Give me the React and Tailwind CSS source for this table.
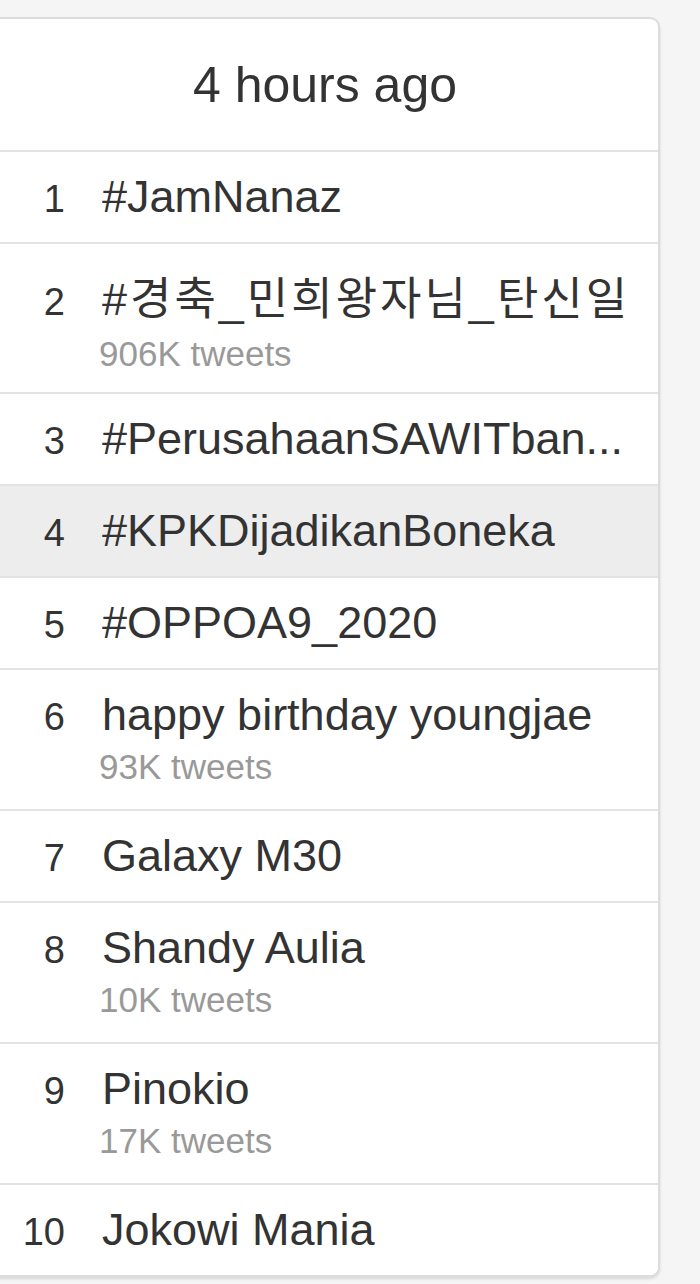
import React from "react";

const trends = [
  { n: 1, t: "#JamNanaz" },
  { n: 2, t: "#경축_민희왕자님_탄신일", s: "906K tweets", kr: true },
  { n: 3, t: "#PerusahaanSAWITban..." },
  { n: 4, t: "#KPKDijadikanBoneka", hl: true },
  { n: 5, t: "#OPPOA9_2020" },
  { n: 6, t: "happy birthday youngjae", s: "93K tweets" },
  { n: 7, t: "Galaxy M30" },
  { n: 8, t: "Shandy Aulia", s: "10K tweets" },
  { n: 9, t: "Pinokio", s: "17K tweets" },
  { n: 10, t: "Jokowi Mania" },
];

const font = {
  fontFamily: '"Liberation Sans", Arial, "Noto Sans CJK KR", sans-serif',
};

export default function App() {
  return (
    <div className="min-h-screen bg-[#f5f5f5] pt-[17px] overflow-hidden" style={font}>
      <div className="w-[670px] -ml-[10px] bg-white border-2 border-[#dcdcdc] rounded-[10px] shadow-[0_2px_3px_rgba(0,0,0,0.12)] overflow-hidden">
        <div className="pt-[37px] pb-[36px] text-center text-[50px] leading-[normal] text-[#333]">
          4 hours ago
        </div>
        {trends.map((r) => (
          <div
            key={r.n}
            className={
              "flex items-baseline border-t-2 border-[#e3e3e3] pt-[19px] " +
              (r.kr ? "pb-[18px] " : r.s ? "pb-[22px] " : "pb-[19px] ") +
              (r.hl ? "bg-[#ededed]" : "bg-white")
            }
          >
            <div className="w-[73px] shrink-0 text-right text-[38px] leading-[normal] text-[#333]">
              {r.n}
            </div>
            <div className="flex-1 min-w-0 pl-[37px] pr-[20px]">
              <div
                className={
                  "whitespace-nowrap overflow-hidden text-[45px] leading-[normal] text-[#333] " +
                  (r.kr ? "tracking-[3px]" : "")
                }
              >
                {r.t}
              </div>
              {r.s && (
                <div className="mt-[6px] -ml-[3px] text-[35px] leading-[normal] text-[#999]">
                  {r.s}
                </div>
              )}
            </div>
          </div>
        ))}
      </div>
    </div>
  );
}
